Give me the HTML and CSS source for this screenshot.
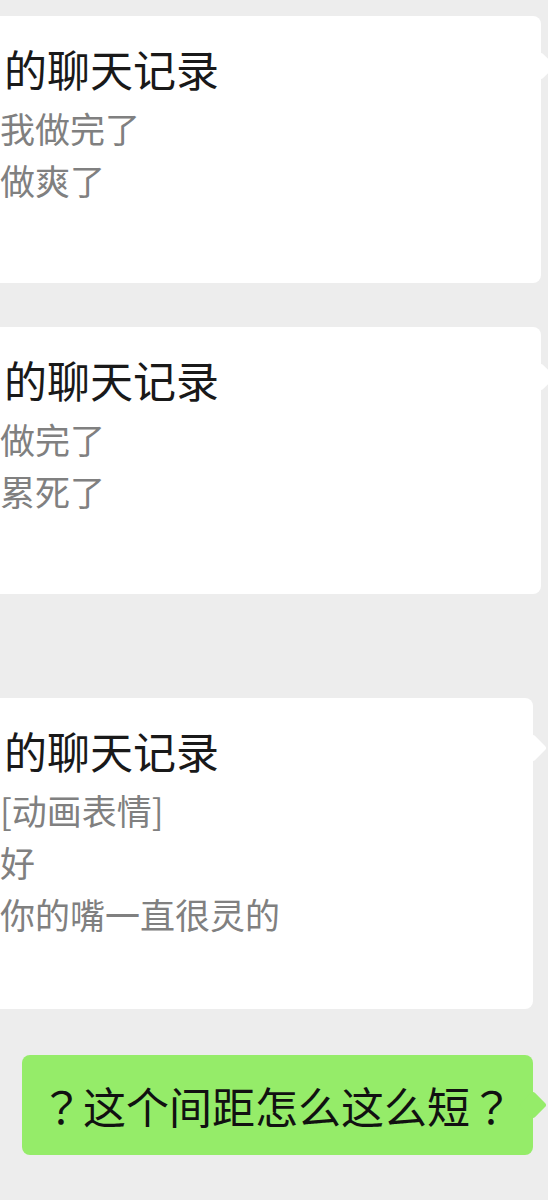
FILE: index.html
```html
<!DOCTYPE html>
<html lang="zh-CN">
<head>
    <meta charset="UTF-8">
    <meta name="viewport" content="width=device-width, initial-scale=1.0">
    <title>聊天</title>
    <link rel="stylesheet" href="styles.css">
</head>
<body>

<div class="chat">
    <!-- forwarded chat records -->
    <div class="row">
        <div class="bubble card">
            <div class="card-title">的聊天记录</div>
            <div class="card-lines">
                <p>我做完了</p>
                <p>做爽了</p>
            </div>
        </div>
    </div>

    <div class="row row-second">
        <div class="bubble card">
            <div class="card-title">的聊天记录</div>
            <div class="card-lines">
                <p>做完了</p>
                <p>累死了</p>
            </div>
        </div>
    </div>

    <div class="row row-third">
        <div class="bubble card card-long">
            <div class="card-title">的聊天记录</div>
            <div class="card-lines">
                <p>[动画表情]</p>
                <p>好</p>
                <p>你的嘴一直很灵的</p>
            </div>
        </div>
    </div>

    <!-- my message -->
    <div class="row row-mine">
        <div class="bubble text-msg"><span class="punct">？</span>这个间距怎么这么短<span class="punct">？</span></div>
    </div>
</div>

</body>
</html>
```

FILE: styles.css
```css
/* General Styles */
body {
    margin: 0;
    background-color: #ededed;
    font-family: "Noto Sans CJK SC", "Noto Sans", sans-serif;
    overflow: hidden;
}

.chat {
    display: flex;
    flex-direction: column;
    padding-top: 16px;
}

.row {
    display: flex;
    justify-content: flex-end;
    padding-right: 7px;
}

.row-second {
    margin-top: 44px;
}

.row-third {
    margin-top: 104px;
    padding-right: 15px;
}

.row-mine {
    margin-top: 46px;
    padding-right: 15px;
}

/* Bubble with tail on the right */
.bubble {
    position: relative;
    background-color: #ffffff;
    border-radius: 8px;
}

.bubble::after {
    content: "";
    position: absolute;
    right: -10px;
    top: 40px;
    width: 20px;
    height: 20px;
    background-color: inherit;
    border-radius: 3px;
    transform: rotate(45deg);
}

/* Chat record card */
.card {
    flex: 1;
    border-radius: 0 8px 8px 0;
    padding: 28px 0 77px 0;
}

.card-long {
    padding-bottom: 69px;
}

.card-title {
    font-size: 43px;
    line-height: 48px;
    color: #191919;
    padding-left: 4px;
}

.card-lines {
    margin-top: 10px;
}

.card-lines p {
    margin: 0;
    font-size: 35px;
    line-height: 52px;
    color: #808080;
}

/* Plain text message */
.text-msg {
    background-color: #95ec69;
    padding: 24px 20px 24px 18px;
    font-size: 43px;
    line-height: 52px;
    color: #111111;
    white-space: nowrap;
}

/* full-width question mark, glyph centred in its cell */
.punct {
    display: inline-block;
    width: 1em;
    text-align: center;
    font-family: "Noto Sans CJK JP", "Noto Sans CJK SC", sans-serif;
}
```
